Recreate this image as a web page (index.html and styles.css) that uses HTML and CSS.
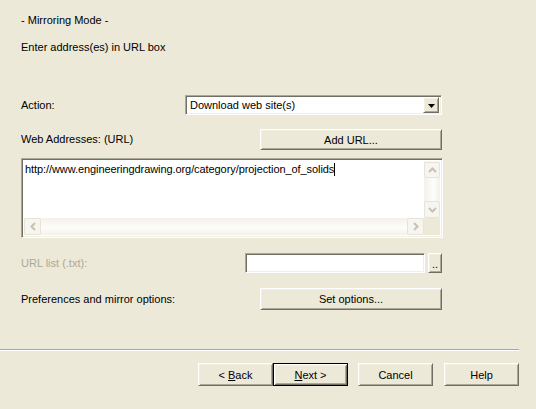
FILE: index.html
```html
<!DOCTYPE html>
<html>
<head>
<meta charset="utf-8">
<link rel="stylesheet" href="styles.css">
</head>
<body>
<div class="dialog">
  <div class="content">
    <div class="line title">- Mirroring Mode -</div>
    <div class="line enter">Enter address(es) in URL box</div>

    <div class="row action">
      <span class="label">Action:</span>
      <div class="combo sunken">
        <span class="combo-text">Download web site(s)</span>
        <span class="combo-btn raised">
          <svg width="7" height="4" viewBox="0 0 7 4"><path d="M0 0h7L3.5 4z" fill="#000"/></svg>
        </span>
      </div>
    </div>

    <div class="row web">
      <span class="label">Web Addresses: (URL)</span>
      <div class="btn wide">Add URL...</div>
    </div>

    <div class="urlbox sunken">
      <div class="urlmain">
        <div class="urltext">http://www.engineeringdrawing.org/category/projection_of_solids<span class="caret"></span></div>
        <div class="vscroll">
          <div class="sbtn up"><svg width="9" height="6" viewBox="0 0 9 6"><path d="M1 5L4.5 1.5L8 5" fill="none" stroke="#C6C3B4" stroke-width="2"/></svg></div>
          <div class="vtrack"></div>
          <div class="sbtn down"><svg width="9" height="6" viewBox="0 0 9 6"><path d="M1 1L4.5 4.5L8 1" fill="none" stroke="#C6C3B4" stroke-width="2"/></svg></div>
        </div>
      </div>
      <div class="hscroll">
        <div class="sbtn left"><svg width="6" height="9" viewBox="0 0 6 9"><path d="M5 1L1.5 4.5L5 8" fill="none" stroke="#C6C3B4" stroke-width="2"/></svg></div>
        <div class="htrack"></div>
        <div class="sbtn right"><svg width="6" height="9" viewBox="0 0 6 9"><path d="M1 1L4.5 4.5L1 8" fill="none" stroke="#C6C3B4" stroke-width="2"/></svg></div>
        <div class="corner"></div>
      </div>
    </div>

    <div class="row urllist">
      <span class="label disabled">URL list (.txt):</span>
      <div class="listctl">
        <div class="field sunken"></div>
        <div class="btn dots">..</div>
      </div>
    </div>

    <div class="row prefs">
      <span class="label">Preferences and mirror options:</span>
      <div class="btn wide tall">Set options...</div>
    </div>
  </div>

  <div class="separator"></div>

  <div class="buttons">
    <div class="btn nav back">&lt;&nbsp;<u>B</u>ack</div>
    <div class="btn nav next"><u>N</u>ext&nbsp;&gt;</div>
    <div class="btn nav cancel">Cancel</div>
    <div class="btn nav help">Help</div>
  </div>
</div>
</body>
</html>
```

FILE: styles.css
```css
* { box-sizing: border-box; }

html, body {
  margin: 0;
  padding: 0;
  background: #ECE9D8;
}

body {
  width: 536px;
  height: 409px;
  overflow: hidden;
  font-family: "Liberation Sans", Arial, sans-serif;
  font-size: 11px;
  color: #000;
}

.dialog {
  display: flex;
  flex-direction: column;
}

.content {
  display: flex;
  flex-direction: column;
  margin-left: 21px;
  width: 421px;
}

.line {
  height: 13px;
  line-height: 13px;
  white-space: nowrap;
}

.title { margin-top: 14px; }
.enter { margin-top: 14px; }

.row {
  display: flex;
  align-items: center;
  justify-content: space-between;
}

.label {
  white-space: nowrap;
  line-height: 13px;
}

.disabled { color: #ACA899; }

.action { margin-top: 41px; height: 20px; }
.web { margin-top: 14px; height: 21px; }
.urllist { margin-top: 15px; height: 20px; }
.prefs { margin-top: 15px; height: 22px; }

.sunken {
  background: #fff;
  border: 1px solid;
  border-color: #ACA899 #fff #fff #ACA899;
  box-shadow: inset 1px 1px 0 #716F64, inset -1px -1px 0 #F1EFE2;
}

.raised, .btn {
  background: #ECE9D8;
  border: 1px solid;
  border-color: #fff #716F64 #716F64 #fff;
  box-shadow: inset 1px 1px 0 #F1EFE2, inset -1px -1px 0 #ACA899;
}

.btn {
  display: flex;
  align-items: center;
  justify-content: center;
  white-space: nowrap;
}

.combo {
  width: 257px;
  height: 20px;
  display: flex;
  align-items: center;
  padding: 2px;
}

.combo-text {
  flex: 1;
  padding-left: 2px;
  line-height: 13px;
}

.combo-btn {
  width: 16px;
  height: 16px;
  display: flex;
  align-items: center;
  justify-content: center;
  padding-top: 1px;
}

.wide { width: 182px; height: 21px; }
.wide.tall { height: 22px; }

.urlbox {
  margin-top: 8px;
  width: 422px;
  height: 80px;
  margin-right: -1px;
  padding: 2px;
  display: flex;
  flex-direction: column;
}

.urlmain {
  flex: 1;
  display: flex;
}

.urltext {
  flex: 1;
  padding: 2px 0 0 1px;
  line-height: 13px;
  white-space: nowrap;
  overflow: hidden;
  letter-spacing: -0.08px;
}

.caret {
  display: inline-block;
  width: 1px;
  height: 13px;
  background: #000;
  vertical-align: top;
}

.vscroll {
  width: 16px;
  display: flex;
  flex-direction: column;
  background: linear-gradient(to right, #F3F1EA, #FDFDFA 60%, #F3F1EA);
}

.vtrack { flex: 1; }

.sbtn {
  width: 16px;
  height: 17px;
  display: flex;
  align-items: center;
  justify-content: center;
  background: #F6F5F0;
  border: 1px solid #E6E3DA;
  border-radius: 2px;
}

.up { margin-top: 1px; height: 16px; }
.down { height: 17px; }

.hscroll {
  height: 17px;
  display: flex;
  background: linear-gradient(to bottom, #F3F1EA, #FDFDFA 60%, #F3F1EA);
}

.htrack { flex: 1; }

.left, .right { width: 17px; height: 17px; }

.corner {
  width: 16px;
  height: 17px;
  background: #ECE9D8;
}

.listctl {
  display: flex;
  gap: 3px;
  height: 20px;
}

.field {
  width: 180px;
  height: 20px;
}

.dots {
  width: 14px;
  height: 20px;
  align-items: flex-end;
  padding-bottom: 4px;
  line-height: 8px;
}

.separator {
  margin-top: 39px;
  width: 519px;
  height: 2px;
  border-top: 1px solid #ACA899;
  border-bottom: 1px solid #fff;
}

.buttons {
  margin-top: 12px;
  width: 519px;
  display: flex;
  justify-content: flex-end;
}

.nav {
  width: 75px;
  height: 23px;
}

.next {
  border: 1px solid #000;
  box-shadow: inset 1px 1px 0 #fff, inset -1px -1px 0 #716F64, inset 2px 2px 0 #F1EFE2, inset -2px -2px 0 #ACA899;
}

.cancel { margin-left: 10px; }
.help { margin-left: 11px; }

u { text-decoration: underline; text-underline-offset: 1px; }
```
